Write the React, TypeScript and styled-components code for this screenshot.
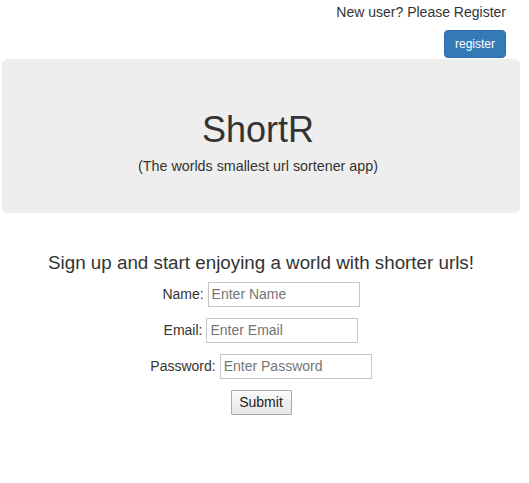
import React from "react";
import styled, { createGlobalStyle } from "styled-components";

const GlobalStyle = createGlobalStyle`
  html, body {
    margin: 0;
    padding: 0;
    background: #fff;
  }
  body {
    font-family: "Liberation Sans", Arial, Helvetica, sans-serif;
    font-size: 14px;
    line-height: 20px;
    color: #333;
  }
`;

const Page = styled.div`
  margin: 0 9px 0 2px;
  display: flex;
  flex-direction: column;
`;

const TopBar = styled.div`
  display: flex;
  flex-direction: column;
  align-items: flex-end;
  padding: 2px 14px 0 0;
`;

const TopText = styled.div`
  font-size: 14px;
  line-height: 20px;
`;

const RegisterButton = styled.button`
  margin-top: 8px;
  height: 28px;
  width: 62px;
  box-sizing: border-box;
  padding: 0 10px;
  font-family: "Liberation Sans", Arial, sans-serif;
  font-size: 12px;
  color: #fff;
  background: #337ab7;
  border: 1px solid #2e6da4;
  border-radius: 4px;
  cursor: pointer;
`;

const Jumbotron = styled.div`
  margin-top: 1px;
  background: #eeeeee;
  border-radius: 6px;
  padding: 51px 6px 37px 0;
  display: flex;
  flex-direction: column;
  align-items: center;
`;

const Title = styled.h1`
  margin: 0;
  font-size: 36px;
  line-height: 39.6px;
  font-weight: 500;
  color: #333;
`;

const Subtitle = styled.p`
  margin: 6px 0 0;
  font-size: 14.3px;
  line-height: 20px;
`;

const Form = styled.form`
  margin-top: 40px;
  display: flex;
  flex-direction: column;
  align-items: center;
`;

const Heading = styled.h3`
  margin: 0 0 9px;
  font-size: 18.8px;
  line-height: 20px;
  font-weight: 500;
  color: #333;
`;

const Row = styled.div`
  display: flex;
  align-items: center;
  justify-content: center;
  gap: 4px;
  margin-bottom: 11px;
`;

const Label = styled.label`
  font-size: 14px;
  line-height: 20px;
`;

const Input = styled.input`
  width: 152px;
  height: 25px;
  box-sizing: border-box;
  padding: 1px 3px;
  font-family: "Liberation Sans", Arial, sans-serif;
  font-size: 14px;
  color: #333;
  border: 1px solid #c6c6c6;
  border-radius: 0;
  background: #fff;
  outline: none;
  &::placeholder {
    color: #757575;
  }
`;

const SubmitButton = styled.button`
  width: 61px;
  height: 25px;
  box-sizing: border-box;
  padding: 1px 6px;
  font-family: "Liberation Sans", Arial, sans-serif;
  font-size: 14px;
  color: #222;
  background: linear-gradient(#fafafa, #e6e6e6);
  border: 1px solid #a9a9a9;
  border-radius: 1px;
`;

export default function App() {
  return (
    <>
      <GlobalStyle />
      <Page>
        <TopBar>
          <TopText>New user? Please Register</TopText>
          <RegisterButton type="button">register</RegisterButton>
        </TopBar>
        <Jumbotron>
          <Title>ShortR</Title>
          <Subtitle>(The worlds smallest url sortener app)</Subtitle>
        </Jumbotron>
        <Form onSubmit={(e) => e.preventDefault()}>
          <Heading>Sign up and start enjoying a world with shorter urls!</Heading>
          <Row>
            <Label htmlFor="name">Name:</Label>
            <Input id="name" type="text" placeholder="Enter Name" />
          </Row>
          <Row>
            <Label htmlFor="email">Email:</Label>
            <Input id="email" type="text" placeholder="Enter Email" />
          </Row>
          <Row>
            <Label htmlFor="password">Password:</Label>
            <Input id="password" type="password" placeholder="Enter Password" />
          </Row>
          <SubmitButton type="submit">Submit</SubmitButton>
        </Form>
      </Page>
    </>
  );
}
